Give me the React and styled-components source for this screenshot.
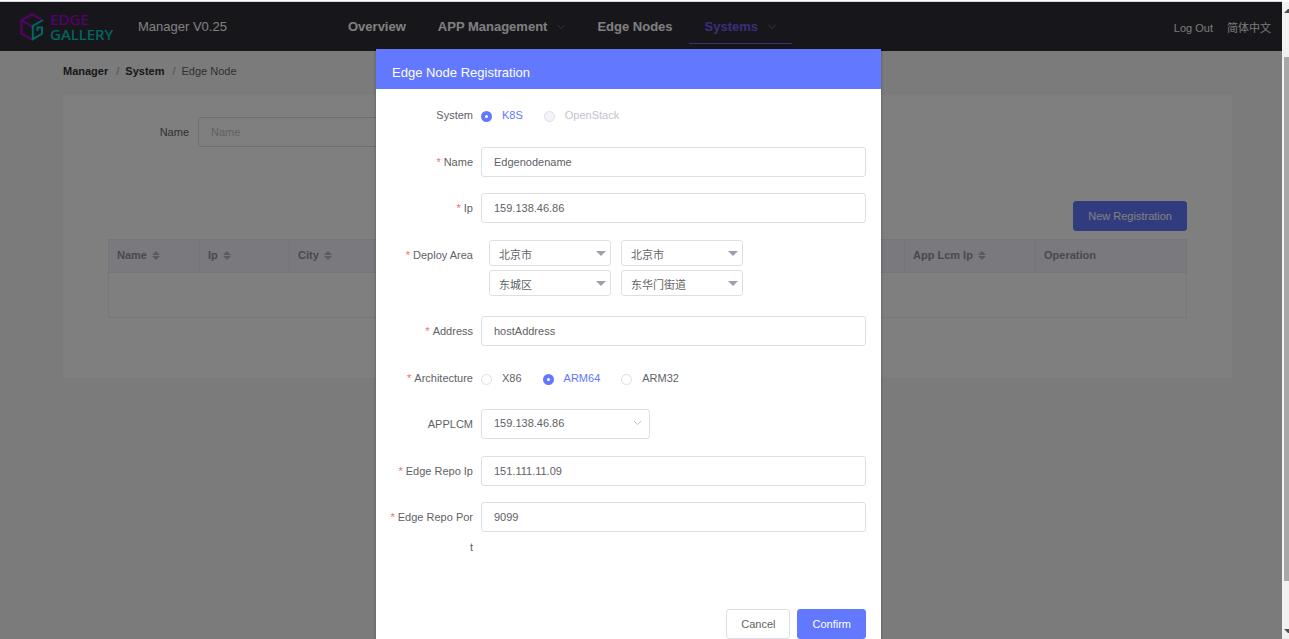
import React from "react";
import styled, { createGlobalStyle, css } from "styled-components";

const accent = "#6278ff";
const sans = '"Liberation Sans", "Noto Sans CJK SC", sans-serif';

const GlobalStyle = createGlobalStyle`
  *, *::before, *::after { box-sizing: border-box; }
  body { margin: 0; background: #fff; font: 11px/30px ${sans}; color: #606266; }
  button, input, select { font: inherit; color: inherit; margin: 0; }
`;

const Viewport = styled.div`
  display: grid;
  grid-template-columns: 1fr 7px;
  height: 100vh;
  padding-top: 1px;
  overflow: hidden;
`;

const Page = styled.div`
  position: relative;
  min-width: 0;
  border-top: 1px solid #d3d6da;
  background: #f6f6f6;
  overflow: hidden;
`;

const TopBar = styled.header`
  display: flex;
  align-items: center;
  height: 49px;
  padding: 0 11px 0 20px;
  background: #2e2c34;
  color: #fff;
`;

const Brand = styled.a`
  display: flex;
  align-items: center;
  gap: 6px;
  width: 118px;
  text-decoration: none;
`;

const BrandText = styled.span`
  display: flex;
  flex-direction: column;
  font: 500 15px/15px "Noto Sans", sans-serif;
  color: #00cfc4;
`;

const BrandTop = styled.span`
  color: #ae00d6;
`;

const Version = styled.span`
  width: 194px;
  font-size: 13px;
`;

const Nav = styled.nav`
  display: flex;
  flex: 1;
`;

const NavItem = styled.a`
  display: flex;
  align-items: center;
  gap: 10px;
  height: 35px;
  padding: 2px 16px 0;
  border-bottom: 1px solid ${(p) => (p.$active ? "#7a5cf5" : "transparent")};
  color: ${(p) => (p.$active ? "#7a5cf5" : "#fff")};
  font-size: 13px;
  font-weight: bold;
  text-decoration: none;
  white-space: nowrap;
`;

const Session = styled.div`
  display: flex;
  gap: 14px;
  padding-top: 3px;
`;

const SessionLink = styled.a`
  color: #f0f0f0;
  text-decoration: none;
`;

const Breadcrumb = styled.nav`
  display: flex;
  height: 44px;
  padding: 5px 63px 0;
`;

const Crumb = styled.a`
  color: ${(p) => (p.$current ? "#606266" : "#303133")};
  font-weight: ${(p) => (p.$current ? "normal" : "bold")};
  text-decoration: none;
`;

const Slash = styled.span`
  padding: 0 6px 0 8px;
  color: #a0a4ac;
`;

const Card = styled.main`
  margin: 0 50px 0 63px;
  padding: 22px 45px 60px;
  background: #fff;
`;

const SearchRow = styled.form`
  display: flex;
  margin-bottom: 54px;
`;

const SearchLabel = styled.label`
  width: 90px;
  padding-right: 9px;
  text-align: right;
`;

const boxed = css`
  border: 1px solid #dcdfe6;
  border-radius: 3px;
  background: #fff;
`;

const TextInput = styled.input`
  ${boxed}
  display: block;
  width: ${(p) => p.$width || "100%"};
  height: 30px;
  padding: 0 12px;
  outline: none;
  &::placeholder { color: #c0c4cc; }
`;

const Actions = styled.div`
  display: flex;
  justify-content: flex-end;
  gap: 7px;
  padding: ${(p) => p.$padding};
`;

const Button = styled.button`
  height: 30px;
  padding: 0 14px;
  border: 1px solid ${(p) => (p.$primary ? accent : "#dcdfe6")};
  border-radius: 3px;
  background: ${(p) => (p.$primary ? accent : "#fff")};
  color: ${(p) => (p.$primary ? "#fff" : "#606266")};
  line-height: 28px;
`;

const Table = styled.table`
  width: 100%;
  table-layout: fixed;
  border-collapse: collapse;
  border: 1px solid #ebeef5;
`;

const HeadCell = styled.th`
  width: ${(p) => p.$width};
  height: 33px;
  padding: 0 8px 2px;
  border: 1px solid #ebebf2;
  background: #f5f4fc;
  color: #909399;
  line-height: 18px;
  text-align: left;
  white-space: nowrap;
`;

const HeadText = styled.span`
  display: flex;
  align-items: center;
  gap: 5px;
`;

const EmptyCell = styled.td`
  height: 45px;
  padding: 0;
`;

const Overlay = styled.div`
  position: absolute;
  inset: 0;
  padding: 47px 25px 0 0;
  background: rgba(0, 0, 0, 0.5);
  overflow: hidden;
`;

const Dialog = styled.section`
  max-width: 505px;
  margin: 0 auto;
  background: #fff;
  box-shadow: 0 1px 3px rgba(0, 0, 0, 0.3);
`;

const DialogTitle = styled.h2`
  margin: 0;
  padding: 4px 16px 0;
  height: 40px;
  background: ${accent};
  color: #fff;
  font-size: 13px;
  font-weight: normal;
  line-height: 40px;
`;

const DialogForm = styled.form`
  padding: 11px 15px 0 12px;
`;

const FormRow = styled.div`
  display: grid;
  grid-template-columns: 85px 1fr;
  column-gap: 8px;
  margin-bottom: 16px;
  &:nth-child(odd) { margin-bottom: 17px; }
  &:last-of-type { margin-bottom: 0; }
`;

const FormLabel = styled.label`
  text-align: right;
  word-break: break-all;
  ${(p) =>
    p.$required &&
    css`
      &::before {
        content: "*";
        margin-right: 3px;
        color: #f56c6c;
      }
    `}
`;

const RadioGroup = styled.div`
  display: flex;
  gap: 21px;
`;

const RadioLabel = styled.label`
  display: flex;
  align-items: center;
  gap: 10px;
  &:has(input:checked) { color: ${accent}; }
  &:has(input:disabled) { color: #c0c4cc; }
`;

const Radio = styled.input.attrs({ type: "radio" })`
  appearance: none;
  width: 11px;
  height: 11px;
  margin-top: 2px;
  border: 1px solid #dcdfe6;
  border-radius: 50%;
  background: #fff;
  &:checked { border: 4px solid ${accent}; }
  &:disabled { background: #f3f4f9; }
`;

const AreaGrid = styled.div`
  display: grid;
  grid-template-columns: repeat(2, 122px);
  gap: 4px 10px;
  padding: 0 0 4px 8px;
`;

const SelectWrap = styled.div`
  position: relative;
  width: ${(p) => p.$width};
`;

const SelectBox = styled.select`
  ${boxed}
  display: block;
  appearance: none;
  width: 100%;
  height: ${(p) => (p.$compact ? "26px" : "30px")};
  padding: ${(p) => (p.$compact ? "4px 20px 0 9px" : "0 24px 2px 12px")};
  line-height: 16px;
  outline: none;
`;

const SelectMark = styled.span`
  position: absolute;
  top: 11px;
  right: ${(p) => (p.$compact ? "5px" : "8px")};
  display: flex;
  color: ${(p) => (p.$compact ? "#9d9dab" : "#c0c4cc")};
  pointer-events: none;
`;

const ScrollTrack = styled.div`
  display: flex;
  flex-direction: column;
  justify-content: space-between;
  margin-top: 1px;
  padding: 7px 0 6px 2px;
  background: #f1f1f1;
  color: #505050;
`;

const ScrollThumb = styled.div`
  flex: 1;
  margin: 44px 0 48px;
  background: #a8a8a8;
`;

const Arrow = styled.svg`
  display: block;
`;

function Logo() {
  return (
    <svg width="24" height="28" viewBox="0 0 24 28" fill="none" strokeWidth="2" aria-hidden="true">
      <path d="M21 6 12 1.3 1.5 7.4v13.2L12 26.5M1.5 7.4 12 13.4" stroke="#ae00d6" />
      <path d="M23 7 12.8 12.8v13.4L22 20.8v-6.3h-4.4v3.6" stroke="#00cfc4" />
    </svg>
  );
}

function Chevron({ color = "currentColor", width = 8 }) {
  return (
    <svg width={width} height="6" viewBox="0 0 8 6" fill="none" stroke={color} aria-hidden="true">
      <path d="M.5 1 4 4.6 7.5 1" />
    </svg>
  );
}

function SortMark() {
  return (
    <svg width="8" height="9" viewBox="0 0 8 9" fill="#b4b7bf" aria-hidden="true">
      <path d="M0 4 4 0l4 4zM0 5h8L4 9z" />
    </svg>
  );
}

function Select({ id, value, width, compact, label }) {
  return (
    <SelectWrap $width={width}>
      <SelectBox id={id} aria-label={label} $compact={compact} defaultValue={value}>
        <option>{value}</option>
      </SelectBox>
      <SelectMark $compact={compact}>
        {compact ? (
          <svg width="10" height="5" viewBox="0 0 10 5" fill="currentColor" aria-hidden="true">
            <path d="M0 0h10L5 5z" />
          </svg>
        ) : (
          <Chevron width={9} />
        )}
      </SelectMark>
    </SelectWrap>
  );
}

function Field({ id, label, required = true, children }) {
  return (
    <FormRow>
      <FormLabel htmlFor={id} $required={required}>{label}</FormLabel>
      {children}
    </FormRow>
  );
}

function Choices({ name, options, selected }) {
  return (
    <RadioGroup role="radiogroup">
      {options.map((o, i) => (
        <RadioLabel key={o.text}>
          <Radio
            id={i === 0 ? name : undefined}
            name={name}
            defaultChecked={o.text === selected}
            disabled={o.disabled}
          />
          {o.text}
        </RadioLabel>
      ))}
    </RadioGroup>
  );
}

const columns = [
  { text: "Name", width: "91px", sort: true },
  { text: "Ip", width: "90px", sort: true },
  { text: "City", width: "91px", sort: true },
  { text: "Address", sort: true },
  { text: "Architecture", width: "131px", sort: true },
  { text: "Edge Repo Ip", width: "131px", sort: true },
  { text: "App Lcm Ip", width: "131px", sort: true },
  { text: "Operation", width: "151px" },
];

const areas = [
  ["Province", "北京市"],
  ["City", "北京市"],
  ["District", "东城区"],
  ["Street", "东华门街道"],
];

export default function App() {
  return (
    <Viewport>
      <GlobalStyle />
      <Page>
        <TopBar>
          <Brand href="#">
            <Logo />
            <BrandText>
              <BrandTop>EDGE</BrandTop>
              <span>GALLERY</span>
            </BrandText>
          </Brand>
          <Version>Manager V0.25</Version>
          <Nav>
            <NavItem href="#">Overview</NavItem>
            <NavItem href="#">APP Management <Chevron color="#74757c" /></NavItem>
            <NavItem href="#">Edge Nodes</NavItem>
            <NavItem href="#" $active>Systems <Chevron color="#74757c" /></NavItem>
          </Nav>
          <Session>
            <SessionLink href="#">Log Out</SessionLink>
            <SessionLink href="#">简体中文</SessionLink>
          </Session>
        </TopBar>
        <Breadcrumb>
          <Crumb href="#">Manager</Crumb>
          <Slash>/</Slash>
          <Crumb href="#">System</Crumb>
          <Slash>/</Slash>
          <Crumb href="#" $current>Edge Node</Crumb>
        </Breadcrumb>
        <Card>
          <SearchRow>
            <SearchLabel htmlFor="search-name">Name</SearchLabel>
            <TextInput id="search-name" placeholder="Name" $width="200px" />
          </SearchRow>
          <Actions $padding="0 0 8px">
            <Button $primary>New Registration</Button>
          </Actions>
          <Table>
            <thead>
              <tr>
                {columns.map((c) => (
                  <HeadCell key={c.text} $width={c.width}>
                    <HeadText>{c.text}{c.sort && <SortMark />}</HeadText>
                  </HeadCell>
                ))}
              </tr>
            </thead>
            <tbody>
              <tr><EmptyCell colSpan={columns.length} /></tr>
            </tbody>
          </Table>
        </Card>
        <Overlay>
          <Dialog role="dialog" aria-labelledby="dialog-title">
            <DialogTitle id="dialog-title">Edge Node Registration</DialogTitle>
            <DialogForm>
              <Field id="system" label="System" required={false}>
                <Choices
                  name="system"
                  selected="K8S"
                  options={[{ text: "K8S" }, { text: "OpenStack", disabled: true }]}
                />
              </Field>
              <Field id="node-name" label="Name">
                <TextInput id="node-name" defaultValue="Edgenodename" />
              </Field>
              <Field id="ip" label="Ip">
                <TextInput id="ip" defaultValue="159.138.46.86" />
              </Field>
              <Field id="area-0" label="Deploy Area">
                <AreaGrid>
                  {areas.map(([label, value], i) => (
                    <Select key={label} id={`area-${i}`} label={label} value={value} compact />
                  ))}
                </AreaGrid>
              </Field>
              <Field id="address" label="Address">
                <TextInput id="address" defaultValue="hostAddress" />
              </Field>
              <Field id="arch" label="Architecture">
                <Choices
                  name="arch"
                  selected="ARM64"
                  options={[{ text: "X86" }, { text: "ARM64" }, { text: "ARM32" }]}
                />
              </Field>
              <Field id="applcm" label="APPLCM" required={false}>
                <Select id="applcm" value="159.138.46.86" width="169px" />
              </Field>
              <Field id="repo-ip" label="Edge Repo Ip">
                <TextInput id="repo-ip" defaultValue="151.111.11.09" />
              </Field>
              <Field id="repo-port" label="Edge Repo Port">
                <TextInput id="repo-port" defaultValue="9099" />
              </Field>
            </DialogForm>
            <Actions $padding="47px 15px 15px">
              <Button>Cancel</Button>
              <Button $primary>Confirm</Button>
            </Actions>
          </Dialog>
        </Overlay>
      </Page>
      <ScrollTrack aria-hidden="true">
        <Arrow width="5" height="4" viewBox="0 0 5 4" fill="currentColor">
          <path d="M0 4 4 0h1v4z" />
        </Arrow>
        <ScrollThumb />
        <Arrow width="5" height="4" viewBox="0 0 5 4" fill="currentColor">
          <path d="M0 0 4 4h1V0z" />
        </Arrow>
      </ScrollTrack>
    </Viewport>
  );
}
